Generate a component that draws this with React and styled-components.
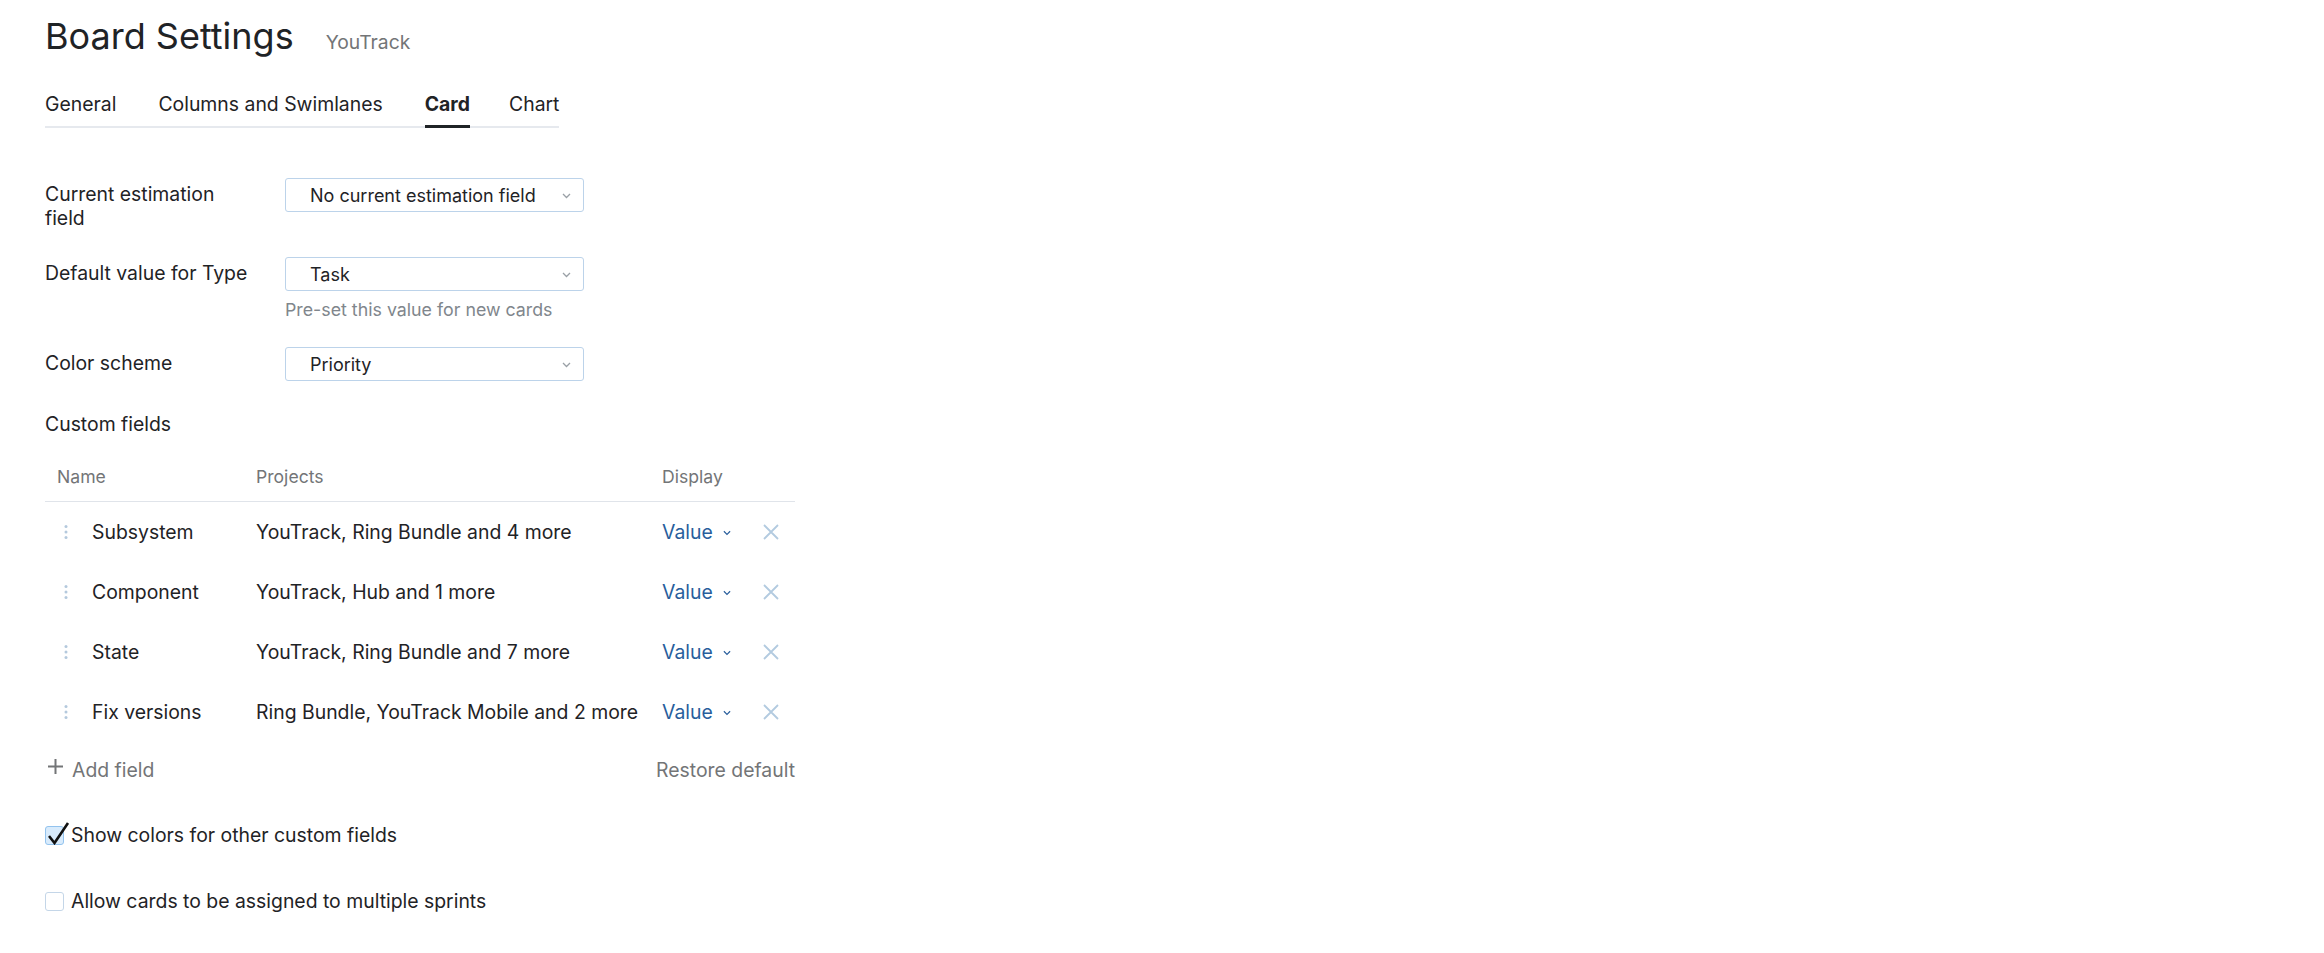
import React from "react";
import styled, { createGlobalStyle } from "styled-components";

const GlobalStyle = createGlobalStyle`
  body {
    margin: 0;
    background: #ffffff;
    font-family: Inter, "Noto Sans", sans-serif;
    color: #1f2326;
  }
`;

const Page = styled.div`
  padding: 14px 0 0 45px;
`;

const Header = styled.div`
  display: flex;
  align-items: baseline;
  gap: 32px;
`;

const Title = styled.h1`
  margin: 0;
  font-size: 36px;
  font-weight: 400;
  line-height: 44px;
`;

const Project = styled.span`
  font-size: 19.3px;
  color: #737577;
`;

const Tabs = styled.div`
  display: inline-flex;
  gap: 42px;
  margin-top: 34px;
  border-bottom: 2px solid #e6e9ee;
`;

const Tab = styled.div`
  font-size: 19.4px;
  line-height: 24px;
  padding: 0 0 9px;
  margin-bottom: -2px;
  margin-left: ${(p) => p.$shift || 0}px;
  font-weight: ${(p) => (p.$active ? 700 : 400)};
  border-bottom: 3px solid ${(p) => (p.$active ? "#1f2326" : "transparent")};
`;

const Form = styled.div`
  margin-top: 50px;
  display: grid;
  grid-template-columns: 240px 299px;
  row-gap: 27px;
  align-items: start;
`;

const Label = styled.div`
  font-size: 19.4px;
  line-height: 24px;
  max-width: 208px;
  padding-top: 4px;
`;

const Field = styled.div`
  display: flex;
  flex-direction: column;
`;

const Select = styled.div`
  height: 34px;
  box-sizing: border-box;
  border: 1px solid #bcd3ea;
  border-radius: 3px;
  padding: 0 12px 0 24px;
  display: flex;
  align-items: center;
  justify-content: space-between;
  font-size: 18px;
`;

const Hint = styled.div`
  font-size: 17.8px;
  line-height: 20px;
  color: #80868c;
  margin-top: 9px;
`;

const Section = styled.div`
  margin-top: 31px;
  font-size: 19.4px;
  line-height: 24px;
`;

const Table = styled.div`
  width: 750px;
  margin-top: 16px;
`;

const Row = styled.div`
  display: grid;
  grid-template-columns: 211px 406px 1fr;
  align-items: center;
  height: ${(p) => (p.$head ? "50px" : "60px")};
  border-bottom: ${(p) => (p.$head ? "1px solid #e0e4ea" : "none")};
  box-sizing: border-box;
  font-size: ${(p) => (p.$head ? "17.6px" : "19.4px")};
  color: ${(p) => (p.$head ? "#737577" : "#1f2326")};
`;

const HeadCell = styled.div`
  padding-left: ${(p) => p.$pad || 0}px;
`;

const NameCell = styled.div`
  display: flex;
  align-items: center;
  padding-left: 19px;
  gap: 24px;
`;

const DisplayCell = styled.div`
  display: flex;
  align-items: center;
  justify-content: space-between;
  padding-right: 16px;
`;

const ValueLink = styled.span`
  color: #285e9c;
  display: inline-flex;
  align-items: center;
  gap: 10px;
`;

const Footer = styled.div`
  width: 750px;
  display: flex;
  justify-content: space-between;
  align-items: center;
  margin-top: 16px;
  font-size: 19.4px;
  line-height: 24px;
  color: #737577;
`;

const AddField = styled.span`
  display: inline-flex;
  align-items: center;
  gap: 9px;
  padding-left: 3px;
`;

const CheckRow = styled.label`
  display: flex;
  align-items: center;
  gap: 7px;
  font-size: 19.4px;
  line-height: 24px;
  margin-top: ${(p) => p.$top}px;
`;

const Box = styled.span`
  position: relative;
  width: 19px;
  height: 19px;
  box-sizing: border-box;
  border-radius: 3px;
  border: 1px solid ${(p) => (p.$checked ? "#93c3ee" : "#c4d6e8")};
  background: ${(p) => (p.$checked ? "#d8ebfc" : "#fff")};
`;

const CheckMark = styled.svg`
  position: absolute;
  left: 2px;
  top: -5px;
`;

const Chevron = ({ color = "#9aa0a6", w = 9 }) => (
  <svg width={w} height="6" viewBox="0 0 9 6" style={{ marginTop: 2 }}>
    <path d="M1 1l3.5 3.5L8 1" fill="none" stroke={color} strokeWidth="1.3" />
  </svg>
);

const Dots = () => (
  <svg width="4" height="16" viewBox="0 0 4 16">
    <circle cx="2" cy="2.5" r="1.5" fill="#b4c9dd" />
    <circle cx="2" cy="8" r="1.5" fill="#b4c9dd" />
    <circle cx="2" cy="13.5" r="1.5" fill="#b4c9dd" />
  </svg>
);

const Cross = () => (
  <svg width="16" height="16" viewBox="0 0 16 16">
    <path d="M1 1l14 14M15 1L1 15" stroke="#b3cbe0" strokeWidth="1.8" />
  </svg>
);

const Plus = () => (
  <svg width="15" height="15" viewBox="0 0 15 15" style={{ marginTop: -7 }}>
    <path d="M7.5 0v15M0 7.5h15" stroke="#737577" strokeWidth="2" />
  </svg>
);

const fields = [
  { name: "Subsystem", projects: "YouTrack, Ring Bundle and 4 more" },
  { name: "Component", projects: "YouTrack, Hub and 1 more" },
  { name: "State", projects: "YouTrack, Ring Bundle and 7 more" },
  { name: "Fix versions", projects: "Ring Bundle, YouTrack Mobile and 2 more" },
];

export default function App() {
  return (
    <Page>
      <GlobalStyle />
      <Header>
        <Title>Board Settings</Title>
        <Project>YouTrack</Project>
      </Header>
      <Tabs>
        <Tab>General</Tab>
        <Tab>Columns and Swimlanes</Tab>
        <Tab $active>Card</Tab>
        <Tab $shift={-3}>Chart</Tab>
      </Tabs>

      <Form>
        <Label>Current estimation field</Label>
        <Field>
          <Select>
            No current estimation field
            <Chevron />
          </Select>
        </Field>
        <Label>Default value for Type</Label>
        <Field>
          <Select>
            Task
            <Chevron />
          </Select>
          <Hint>Pre-set this value for new cards</Hint>
        </Field>
        <Label>Color scheme</Label>
        <Field>
          <Select>
            Priority
            <Chevron />
          </Select>
        </Field>
      </Form>

      <Section>Custom fields</Section>
      <Table>
        <Row $head>
          <HeadCell $pad={12}>Name</HeadCell>
          <HeadCell>Projects</HeadCell>
          <HeadCell>Display</HeadCell>
        </Row>
        {fields.map((f) => (
          <Row key={f.name}>
            <NameCell>
              <Dots />
              {f.name}
            </NameCell>
            <div>{f.projects}</div>
            <DisplayCell>
              <ValueLink>
                Value
                <Chevron color="#285e9c" w={8} />
              </ValueLink>
              <Cross />
            </DisplayCell>
          </Row>
        ))}
      </Table>
      <Footer>
        <AddField>
          <Plus />
          Add field
        </AddField>
        <span>Restore default</span>
      </Footer>

      <CheckRow $top={41}>
        <Box $checked>
          <CheckMark width="22" height="23" viewBox="0 0 22 23">
            <path d="M1 14l5.5 7L20 1" fill="none" stroke="#111" strokeWidth="2.6" />
          </CheckMark>
        </Box>
        Show colors for other custom fields
      </CheckRow>
      <CheckRow $top={42}>
        <Box />
        Allow cards to be assigned to multiple sprints
      </CheckRow>
    </Page>
  );
}
